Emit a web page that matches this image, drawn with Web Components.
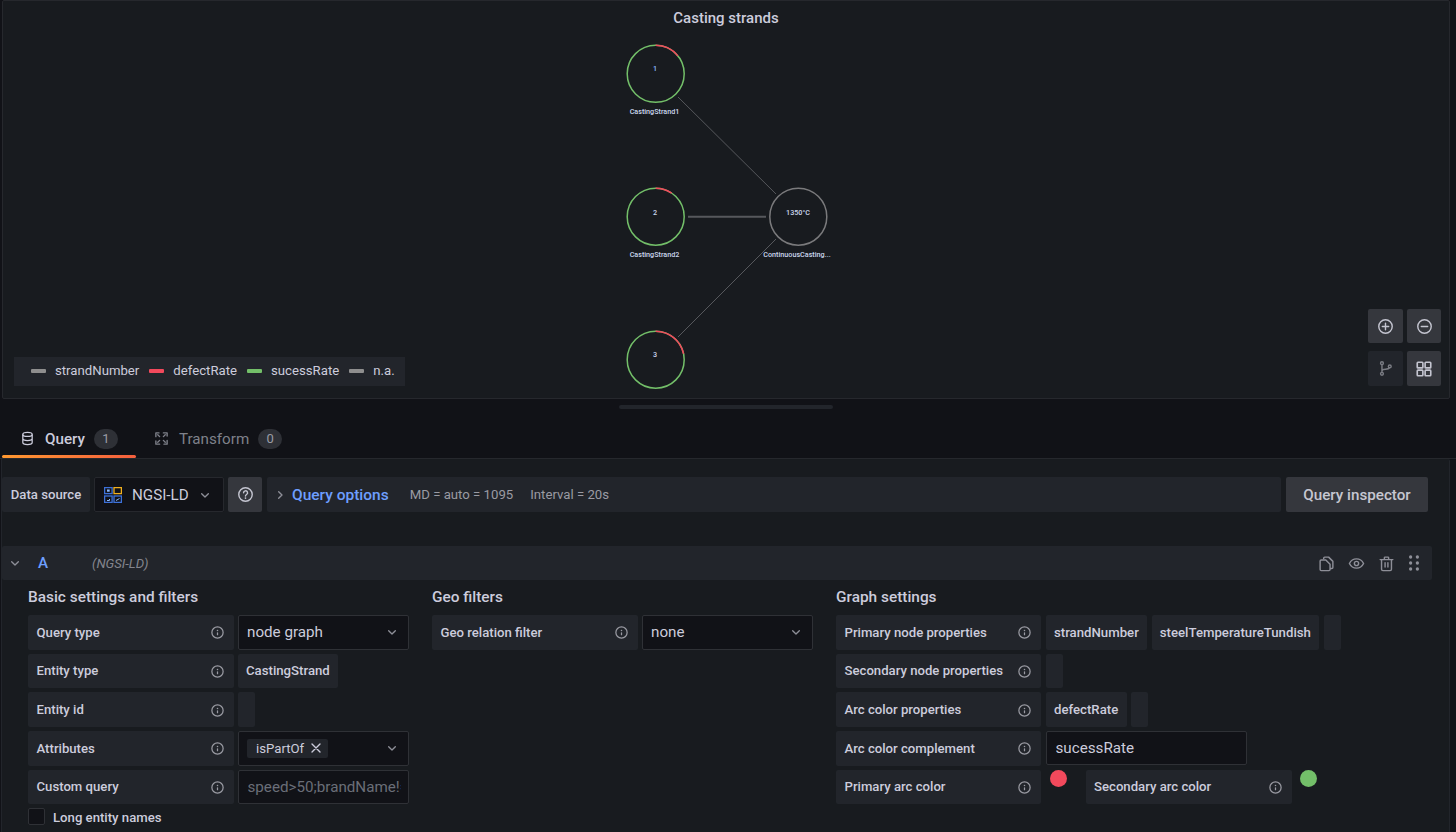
<!DOCTYPE html>
<html>
<head>
<meta charset="UTF-8">
<title>Casting strands</title>
<style>
  html, body { margin: 0; height: 100%; overflow: hidden; background: #111217; }
  body { font-family: Roboto, "Liberation Sans", sans-serif; color: #ccccdc; }
</style>
</head>
<body>
<app-page></app-page>
<script type="module">
const ICONS = {
  info: '<path fill="currentColor" d="M12 2a10 10 0 1 0 10 10A10 10 0 0 0 12 2Zm0 18a8 8 0 1 1 8-8 8 8 0 0 1-8 8Zm0-8.500a1 1 0 0 0-1 1v3a1 1 0 0 0 2 0v-3a1 1 0 0 0-1-1Zm0-4a1.250 1.250 0 1 0 1.250 1.250A1.250 1.250 0 0 0 12 7.500Z"/>',
  chevron: '<path fill="none" stroke="currentColor" stroke-width="2" stroke-linecap="round" stroke-linejoin="round" d="M7 10l5 5 5-5"/>',
  right: '<path fill="none" stroke="currentColor" stroke-width="2" stroke-linecap="round" stroke-linejoin="round" d="M10 7l5 5-5 5"/>',
  plus: '<circle cx="12" cy="12" r="9.500" fill="none" stroke="currentColor" stroke-width="2"/><path stroke="currentColor" stroke-width="2" stroke-linecap="round" d="M12 7.500v9M7.500 12h9"/>',
  minus: '<circle cx="12" cy="12" r="9.500" fill="none" stroke="currentColor" stroke-width="2"/><path stroke="currentColor" stroke-width="2" stroke-linecap="round" d="M7.500 12h9"/>',
  branch: '<g fill="none" stroke="currentColor" stroke-width="2"><circle cx="7" cy="4.500" r="2"/><circle cx="7" cy="19.500" r="2"/><circle cx="18" cy="9" r="2"/><path d="M7 6.500v11M7 15.500c0-2 2-2.500 5-2.500 3 0 5-.8 5.600-2.200"/></g>',
  grid: '<g fill="none" stroke="currentColor" stroke-width="2.200"><rect x="3" y="3" width="7.500" height="7.500" rx="1"/><rect x="13.500" y="3" width="7.500" height="7.500" rx="1"/><rect x="3" y="13.500" width="7.500" height="7.500" rx="1"/><rect x="13.500" y="13.500" width="7.500" height="7.500" rx="1"/></g>',
  help: '<circle cx="12" cy="12" r="9.500" fill="none" stroke="currentColor" stroke-width="2"/><path fill="none" stroke="currentColor" stroke-width="2" stroke-linecap="round" d="M9.300 9.600a2.800 2.800 0 1 1 4.200 2.400c-1 .6-1.500 1-1.500 2"/><circle cx="12" cy="17" r="1.200" fill="currentColor"/>',
  database: '<g fill="none" stroke="currentColor" stroke-width="2"><ellipse cx="12" cy="5.500" rx="7.500" ry="3.200"/><path d="M4.500 5.500v13c0 1.800 3.400 3.200 7.500 3.200s7.500-1.400 7.500-3.200v-13M4.500 12c0 1.800 3.400 3.200 7.500 3.200s7.500-1.400 7.500-3.200"/></g>',
  transform: '<g fill="none" stroke="currentColor" stroke-width="2.200" stroke-linecap="round" stroke-linejoin="round"><path d="M3 9V3h5M9 9L6 6M15 3h6v5M15 9l3-3M21 15v6h-5M15 15l3 3M9 21H3v-5M9 15l-3 3"/></g>',
  copy: '<g fill="none" stroke="currentColor" stroke-width="2" stroke-linejoin="round"><path d="M8 6V4.500A1.500 1.500 0 0 1 9.500 3H15l6 6v8.500a1.500 1.500 0 0 1-1.500 1.500H17"/><path d="M4.500 7H11l6 6v7.500a1.500 1.500 0 0 1-1.500 1.500h-11A1.500 1.500 0 0 1 3 20.500v-12A1.500 1.500 0 0 1 4.500 7Z"/></g>',
  eye: '<g fill="none" stroke="currentColor" stroke-width="2"><path d="M2 12c2.200-4.400 5.700-6.500 10-6.500s7.800 2.100 10 6.500c-2.200 4.400-5.700 6.500-10 6.500S4.200 16.400 2 12Z"/><circle cx="12" cy="12" r="3"/></g>',
  trash: '<g fill="none" stroke="currentColor" stroke-width="2" stroke-linecap="round" stroke-linejoin="round"><path d="M3 6.500h18M9 6.500V4a1 1 0 0 1 1-1h4a1 1 0 0 1 1 1v2.500M5 6.500V20a2 2 0 0 0 2 2h10a2 2 0 0 0 2-2V6.500M10 11v6M14 11v6"/></g>',
  drag: '<g fill="currentColor"><circle cx="7.500" cy="4" r="2.200"/><circle cx="16.500" cy="4" r="2.200"/><circle cx="7.500" cy="12" r="2.200"/><circle cx="16.500" cy="12" r="2.200"/><circle cx="7.500" cy="20" r="2.200"/><circle cx="16.500" cy="20" r="2.200"/></g>',
  times: '<path stroke="currentColor" stroke-width="2" stroke-linecap="round" d="M6 6l12 12M18 6L6 18"/>'
};

function icon(name, size) {
  return `<svg width="${size}" height="${size}" viewBox="0 0 24 24" style="display:block;flex:none">${ICONS[name]}</svg>`;
}

class BaseEl extends HTMLElement {
  constructor() {
    super();
    this.attachShadow({mode: 'open'});
  }
  connectedCallback() {
    this.shadowRoot.innerHTML = this.render();
  }
}

class NodeGraph extends BaseEl {
  render() {
    const node = (cx, cy, color) => `<circle cx="${cx}" cy="${cy}" r="28.500" fill="none" stroke="${color}" stroke-width="1.500"/>`;
    const arc = (cx, cy, deg) => {
      const a = deg * Math.PI / 180;
      const x = cx + 28.5 * Math.sin(a), y = cy - 28.5 * Math.cos(a);
      return `<path d="M${cx} ${cy - 28.5}A28.500 28.500 0 0 1 ${x.toFixed(2)} ${y.toFixed(2)}" fill="none" stroke="#f2495c" stroke-width="1.500"/>`;
    };
    const label = (x, y, t, c) => `<text x="${x}" y="${y}" fill="${c || '#ccd8ee'}" font-size="7.200" font-weight="500" text-anchor="middle">${t}</text>`;
    return `<style>
      :host { display: block; }
      svg { display: block; font-family: Roboto, "Liberation Sans", sans-serif; }
    </style>
    <svg width="1446" height="396" viewBox="3 1 1446 396">
      <g stroke="#56585c" fill="none">
        <path d="M678 97L776 194" stroke-width="1"/>
        <path d="M688 216.700H766" stroke-width="2"/>
        <path d="M678 337L776 239" stroke-width="1"/>
      </g>
      ${node(655.7, 73.8, '#73bf69')}${arc(655.7, 73.8, 51)}
      ${node(655.7, 216.7, '#73bf69')}${arc(655.7, 216.7, 34)}
      ${node(655.7, 359.7, '#73bf69')}${arc(655.7, 359.7, 78)}
      ${node(798.3, 216.7, '#7a7a7c')}
      ${label(655, 71, '1', '#8ab8ff')}${label(654.5, 114, 'CastingStrand1')}
      ${label(655, 214.500, '2')}${label(654.5, 257, 'CastingStrand2')}
      ${label(655, 357, '3')}
      ${label(798, 214.500, '1350°C')}${label(797, 257, 'ContinuousCasting...')}
    </svg>`;
  }
}

class GraphLegend extends BaseEl {
  render() {
    return `<style>
      :host { position: absolute; left: 11px; top: 356px; display: flex; height: 29px; width: 391px; box-sizing: border-box;
        padding: 0 0 2px 17px; gap: 10px; align-items: center; background: #22252b; }
    </style><slot></slot>`;
  }
}

class LegendItem extends BaseEl {
  render() {
    return `<style>
      :host { display: flex; align-items: center; gap: 9px; font-size: 13.200px; color: #ccccdc; }
      i { display: block; width: 15px; height: 4px; border-radius: 1px; background: ${this.getAttribute('color')}; }
    </style><i></i><slot></slot>`;
  }
}

class GraphPanel extends BaseEl {
  render() {
    return `<style>
      :host { display: block; position: relative; margin-left: 2px; width: 1448px; height: 399px; box-sizing: border-box;
        background: #181b1f; border: 1px solid #26282d; border-radius: 2px; overflow: hidden; }
      h2 { position: absolute; top: 9px; left: 0; right: 0; margin: 0; text-align: center; font-size: 15px; line-height: 16px; font-weight: 500; color: #ccccdc; }
      .controls { position: absolute; left: 1365px; top: 308px; display: grid; grid-template-columns: 35px 34px; grid-template-rows: 34px 35px; gap: 8px 4px; }
    </style>
    <node-graph></node-graph>
    <h2>Casting strands</h2>
    <graph-legend>
      <legend-item color="#8e8e8e">strandNumber</legend-item>
      <legend-item color="#f2495c">defectRate</legend-item>
      <legend-item color="#73bf69">sucessRate</legend-item>
      <legend-item color="#8e8e8e">n.a.</legend-item>
    </graph-legend>
    <div class="controls">
      <icon-button icon="plus"></icon-button>
      <icon-button icon="minus"></icon-button>
      <icon-button icon="branch" dim></icon-button>
      <icon-button icon="grid" size="18"></icon-button>
    </div>`;
  }
}

class IconButton extends BaseEl {
  render() {
    const dim = this.hasAttribute('dim');
    const size = this.getAttribute('size') || 17;
    return `<style>
      :host { display: flex; align-items: center; justify-content: center; border-radius: 2px;
        background: ${dim ? '#22252b' : '#35373d'}; color: ${dim ? '#7b7d84' : '#c4c5d0'}; }
    </style>${icon(this.getAttribute('icon'), size)}`;
  }
}

class QueryTab extends BaseEl {
  render() {
    const active = this.hasAttribute('active');
    return `<style>
      :host { display: flex; align-items: center; height: 38px; box-sizing: border-box; padding-left: ${this.getAttribute('pad') || 0}px; padding-bottom: 1px; position: relative;
        width: ${this.getAttribute('w')}px; font-size: 15.200px; font-weight: ${active ? 500 : 400}; color: ${active ? '#ccccdc' : '#7f818a'}; }
      .ic { margin-right: 10px; color: ${active ? '#ccccdc' : '#7f818a'}; }
      .badge { margin-left: 9px; width: 24px; height: 20px; border-radius: 10px; background: #2e3036; font-size: 13px; font-weight: 400; color: #9b9ca5; display: flex; align-items: center; justify-content: center; }
      .bar { position: absolute; left: 0; right: 0; bottom: 0; height: 3px; border-radius: 2px; background: linear-gradient(90deg, #ff9830, #f55f3e); display: ${active ? 'block' : 'none'}; }
    </style>
    <span class="ic">${icon(this.getAttribute('icon'), 15)}</span><slot></slot>
    <span class="badge">${this.getAttribute('count')}</span><span class="bar"></span>`;
  }
}

class TabBar extends BaseEl {
  render() {
    return `<style>
      :host { display: flex; margin-top: 11px; height: 39px; box-sizing: border-box; padding-left: 2px; border-bottom: 1px solid #26282d; gap: 0; }
    </style><slot></slot>`;
  }
}

class ToolbarRow extends BaseEl {
  render() {
    return `<style>
      :host { display: flex; gap: 4px; height: 35px; margin-top: 18px; }
      .label { width: 88px; background: #22252b; border-radius: 2px; font-size: 13.170px; font-weight: 500; display: flex; align-items: center; justify-content: center; }
      .ds { width: 130px; box-sizing: border-box; background: #111217; border: 1px solid #26282d; border-radius: 2px; display: flex; align-items: center; padding-left: 9px; font-size: 15.200px; }
      .ds svg.logo { margin-right: 10px; flex: none; }
      .ds span { color: #ccccdc; }
      .ds .c { margin-left: 8px; color: #8e8f98; }
      .help { width: 34px; }
      .opts { width: 1014px; margin-left: 1px; background: #22252b; border-radius: 2px; display: flex; align-items: center; padding-left: 5px; box-sizing: border-box; font-size: 13.200px; color: #9a9ba3; }
      .opts .r { color: #8e8f98; margin-right: 4px; }
      .opts b { font-size: 15.500px; font-weight: 500; color: #6e9fff; margin-right: 21px; }
      .opts em { font-style: normal; margin-right: 17px; }
      .insp { width: 142px; margin-left: 1px; background: #35373d; border-radius: 2px; color: #c6c7d1; display: flex; align-items: center; justify-content: center; font-size: 15.200px; font-weight: 500; }
    </style>
    <div class="label">Data source</div>
    <div class="ds">
      <svg class="logo" width="18" height="16" viewBox="0 0 18 16" fill="none">
        <rect x=".6" y=".6" width="7.500" height="6" stroke="#3d71d9" stroke-width="1.300"/><rect x="3" y="2.500" width="2.700" height="2.200" fill="#8ab8ff"/>
        <rect x="10" y=".6" width="7.400" height="6" stroke="#f2b01e" stroke-width="1.300"/>
        <rect x=".6" y="9" width="7.500" height="6.400" stroke="#3d71d9" stroke-width="1.300"/><path d="M3 13.500h2.500V12" stroke="#8ab8ff"/>
        <rect x="10" y="9" width="7.400" height="6.400" stroke="#3d71d9" stroke-width="1.300"/><path d="M12 13.500l3.500-2" stroke="#8ab8ff"/>
      </svg>
      <span>NGSI-LD</span><span class="c">${icon('chevron', 16)}</span>
    </div>
    <icon-button class="help" icon="help"></icon-button>
    <div class="opts"><span class="r">${icon('right', 16)}</span><b>Query options</b><em>MD = auto = 1095</em><em>Interval = 20s</em></div>
    <div class="insp">Query inspector</div>`;
  }
}

class QueryHeader extends BaseEl {
  render() {
    return `<style>
      :host { display: flex; align-items: center; margin: 34px 0 0 0; width: 1430px; height: 34px; background: #22252b; border-radius: 2px; position: relative; color: #8e8f98; }
      .c { margin-left: 5px; width: 17px; }
      .a { margin-left: 14px; width: 54px; font-size: 15.200px; font-weight: 500; color: #6e9fff; }
      i { font-size: 13.200px; color: #84858e; }
      .tools { margin-left: auto; display: flex; gap: 13px; align-items: center; margin-right: 9px; }
    </style>
    <span class="c">${icon('chevron', 16)}</span><span class="a">A</span><i>(NGSI-LD)</i>
    <div class="tools">${icon('copy', 17)}${icon('eye', 17)}${icon('trash', 17)}<span style="margin-left:-3px">${icon('drag', 18)}</span></div>`;
  }
}

class FormSection extends BaseEl {
  render() {
    return `<style>
      :host { display: flex; flex-direction: column; gap: 4px; }
      h3 { margin: 1px 0 1px; font-size: 15.400px; line-height: 32px; height: 29px; font-weight: 500; color: #ccccdc; }
    </style><h3>${this.getAttribute('title')}</h3><slot></slot>`;
  }
}

class FieldRow extends BaseEl {
  render() {
    const w = this.getAttribute('w') || 206;
    return `<style>
      :host { display: flex; height: 34.670px; gap: ${w == 205 ? 5 : 4}px; }
      .l { width: ${w}px; box-sizing: border-box; flex: none; background: #22252b; border-radius: 2px; display: flex; align-items: center; justify-content: space-between;
        padding: 0 9px 0 8.500px; font-size: 13.170px; font-weight: 500; color: #ccccdc; }
      .l svg { margin-top: 1px; color: #9a9ba3; }
      .v { display: flex; gap: 4.500px; align-items: flex-start; }
    </style><div class="l"><span>${this.getAttribute('label')}</span>${icon('info', 15)}</div><div class="v"><slot></slot></div>`;
  }
}

class ValueChip extends BaseEl {
  render() {
    return `<style>
      :host { display: flex; align-items: center; box-sizing: border-box; height: 34.670px; min-width: 17px; padding: 0 8.500px 0 8px; background: #22252b; border-radius: 2px; font-size: 13.200px; font-weight: 500; color: #ccccdc; }
    </style><slot></slot>`;
  }
}

class ValueSelect extends BaseEl {
  render() {
    return `<style>
      :host { display: flex; align-items: center; box-sizing: border-box; height: 34.670px; width: ${this.getAttribute('w') || 171}px; padding: 0 8px; background: #111217; border: 1px solid #2f3136; border-radius: 2px; font-size: 15.200px; color: #ccccdc; }
      .g { flex: 1; display: flex; }
      .c { color: #8e8f98; }
    </style><span class="g"><slot></slot></span><span class="c">${icon('chevron', 16)}</span>`;
  }
}

class ValueTag extends BaseEl {
  render() {
    return `<style>
      :host { display: flex; align-items: center; height: 19px; padding: 0 4px 0 9px; gap: 4px; background: #22252b; border-radius: 2px; font-size: 13.200px; color: #ccccdc; }
    </style><slot></slot>${icon('times', 16)}`;
  }
}

class ValueInput extends BaseEl {
  render() {
    const ph = this.hasAttribute('placeholder');
    return `<style>
      :host { display: block; box-sizing: border-box; height: 34px; width: ${this.getAttribute('w') || 171}px; padding: 0 7px 0 8.500px; background: #111217; border: 1px solid #2f3136; border-radius: 2px; font-size: 15.200px; line-height: 33px; color: ${ph ? '#6a6e78' : '#ccccdc'}; overflow: hidden; }
      div { overflow: hidden; white-space: nowrap; }
    </style><div><slot></slot></div>`;
  }
}

class ColorDot extends BaseEl {
  render() {
    return `<style>
      :host { display: block; width: 17px; height: 17px; border-radius: 50%; background: ${this.getAttribute('color')}; margin: 0 ${this.getAttribute('mr') || 0}px 0 4px; }
    </style>`;
  }
}

class LongNames extends BaseEl {
  render() {
    return `<style>
      :host { display: flex; align-items: center; gap: 8px; font-size: 13.170px; font-weight: 500; color: #ccccdc; height: 17px; }
      i { display: block; width: 15px; height: 15px; background: #111217; border: 1px solid #2f3136; border-radius: 2px; }
      span { padding-top: 1px; }
    </style><i></i><span><slot></slot></span>`;
  }
}

class QueryEditor extends BaseEl {
  render() {
    return `<style>
      :host { display: block; background: #181b1f; width: 1449px; height: 373px; box-sizing: border-box; margin-left: 1px; border: 1px solid #22252b; border-width: 0 1px 0 1px; border-radius: 0 2px 0 0; overflow: hidden; }
      .cols { display: grid; grid-template-columns: 404px 404px 1fr; padding-left: 26px; }
    </style><slot name="top"></slot><div class="cols"><slot></slot></div>`;
  }
}

class AppPage extends BaseEl {
  render() {
    return `<style>
      :host { display: block; }
      .grip { margin: 6px 0 0 619px; width: 214px; height: 4px; border-radius: 2px; background: #22252b; }
    </style>
    <graph-panel></graph-panel>
    <div class="grip"></div>
    <tab-bar>
      <query-tab active w="134" pad="18" icon="database" count="1">Query</query-tab>
      <query-tab w="160" pad="18" icon="transform" count="0">Transform</query-tab>
    </tab-bar>
    <query-editor>
      <toolbar-row slot="top"></toolbar-row>
      <query-header slot="top"></query-header>
      <form-section title="Basic settings and filters">
        <field-row label="Query type"><value-select>node graph</value-select></field-row>
        <field-row label="Entity type"><value-chip>CastingStrand</value-chip></field-row>
        <field-row label="Entity id"><value-chip></value-chip></field-row>
        <field-row label="Attributes"><value-select><value-tag>isPartOf</value-tag></value-select></field-row>
        <field-row label="Custom query"><value-input placeholder>speed&gt;50;brandName!=</value-input></field-row>
        <long-names>Long entity names</long-names>
      </form-section>
      <form-section title="Geo filters">
        <field-row label="Geo relation filter"><value-select>none</value-select></field-row>
      </form-section>
      <form-section title="Graph settings">
        <field-row w="205" label="Primary node properties"><value-chip>strandNumber</value-chip><value-chip>steelTemperatureTundish</value-chip><value-chip></value-chip></field-row>
        <field-row w="205" label="Secondary node properties"><value-chip></value-chip></field-row>
        <field-row w="205" label="Arc color properties"><value-chip>defectRate</value-chip><value-chip></value-chip></field-row>
        <field-row w="205" label="Arc color complement"><value-input w="201">sucessRate</value-input></field-row>
        <field-row w="205" label="Primary arc color"><color-dot color="#f2495c" mr="14"></color-dot><secondary-wrap></secondary-wrap></field-row>
      </form-section>
    </query-editor>`;
  }
}

class SecondaryWrap extends BaseEl {
  render() {
    return `<style>
      :host { display: flex; gap: 4px; }
    </style><field-row label="Secondary arc color"><color-dot color="#73bf69"></color-dot></field-row>`;
  }
}

const defs = {
  'node-graph': NodeGraph, 'graph-legend': GraphLegend, 'legend-item': LegendItem, 'graph-panel': GraphPanel,
  'icon-button': IconButton, 'query-tab': QueryTab, 'tab-bar': TabBar, 'toolbar-row': ToolbarRow,
  'query-header': QueryHeader, 'form-section': FormSection, 'field-row': FieldRow, 'value-chip': ValueChip,
  'value-select': ValueSelect, 'value-tag': ValueTag, 'value-input': ValueInput, 'color-dot': ColorDot,
  'long-names': LongNames, 'query-editor': QueryEditor, 'secondary-wrap': SecondaryWrap, 'app-page': AppPage
};
for (const name in defs) customElements.define(name, defs[name]);
</script>
</body>
</html>
